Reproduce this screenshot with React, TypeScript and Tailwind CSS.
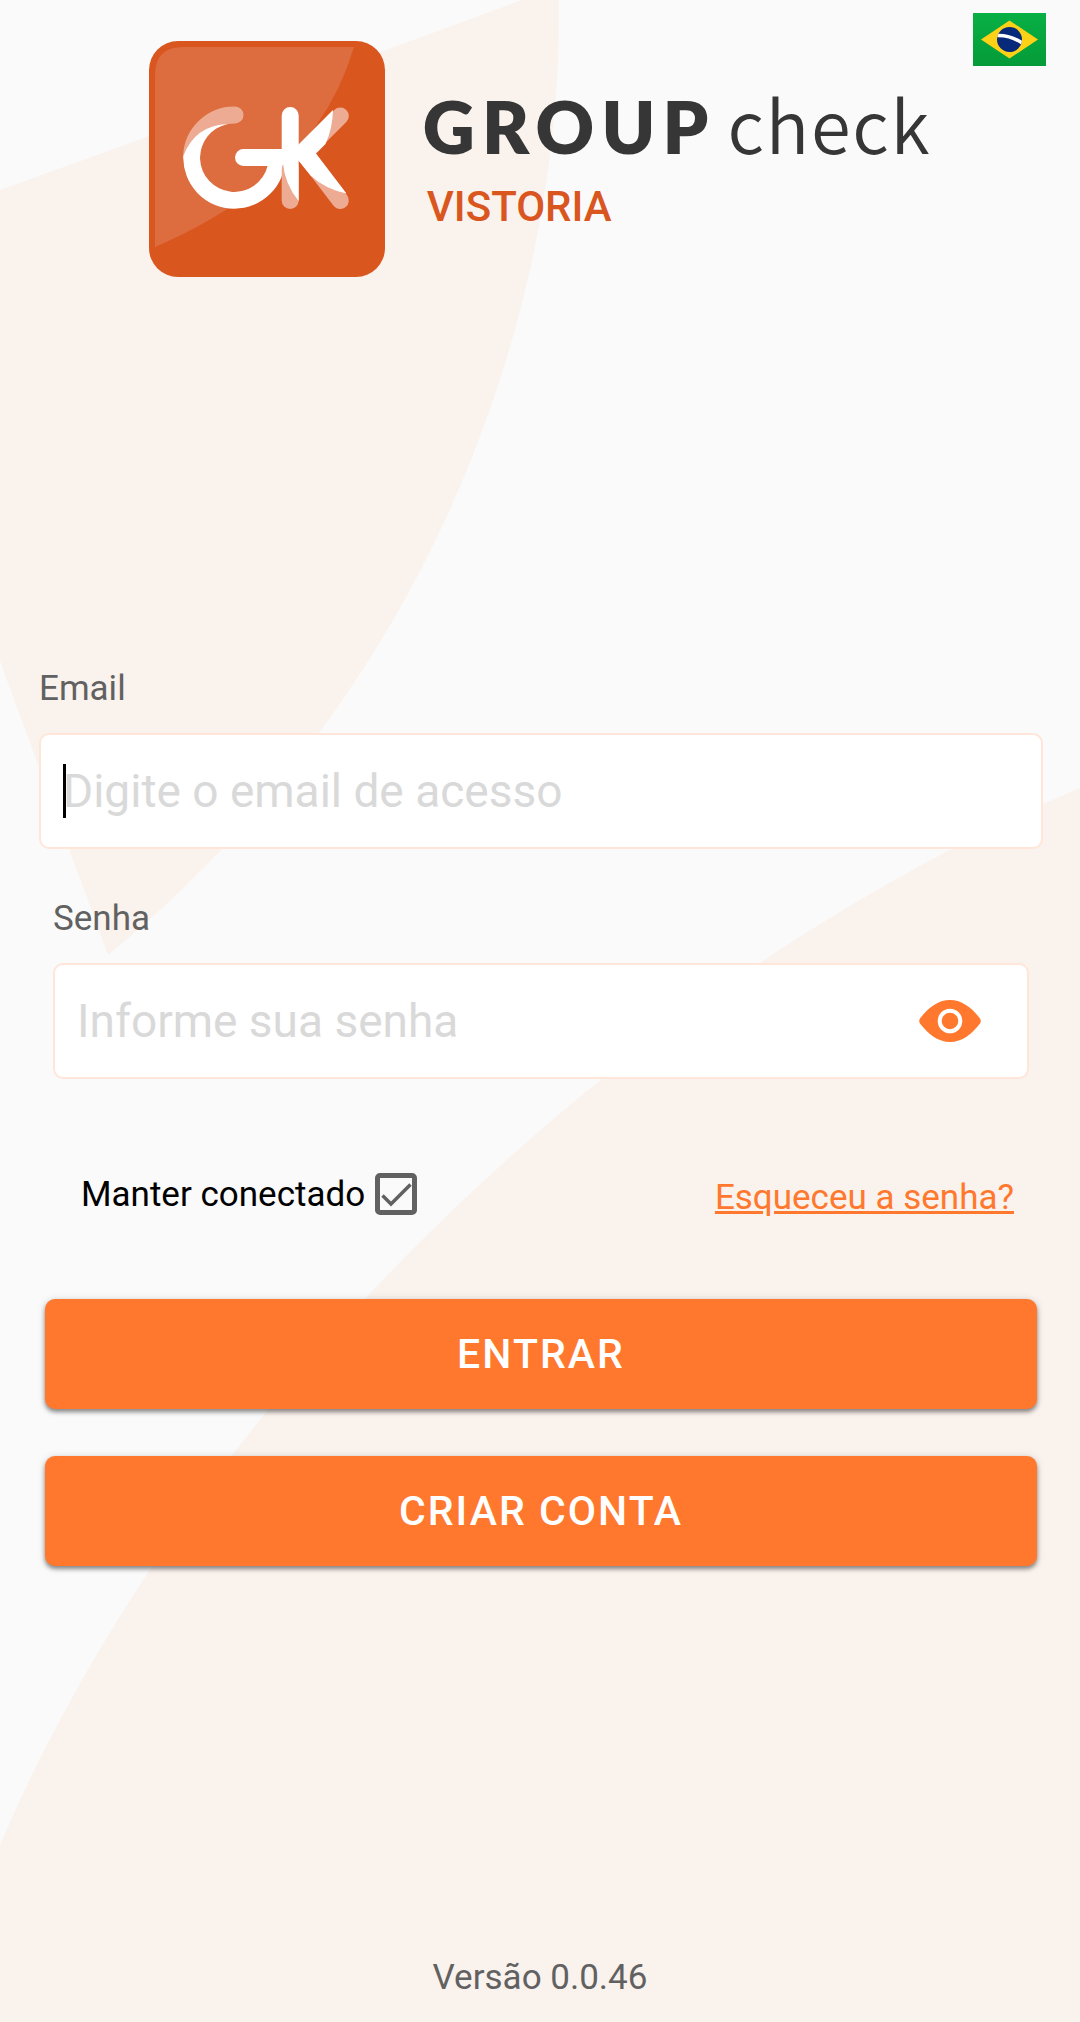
import { useState } from "react";

const FlagBrazil = () => (
  <svg viewBox="0 0 73 53" className="h-[53px] w-[73px]" aria-hidden="true">
    <defs>
      <linearGradient id="flag-green" x1="0" y1="0" x2="0" y2="1">
        <stop offset="0" stopColor="#08b045" />
        <stop offset="1" stopColor="#059b38" />
      </linearGradient>
      <clipPath id="flag-globe">
        <circle cx="36.5" cy="26.5" r="12.5" />
      </clipPath>
    </defs>
    <rect width="73" height="53" fill="url(#flag-green)" />
    <path d="M36.5 7.5 65 26.5 36.5 45.5 8 26.5Z" fill="#fdd116" />
    <circle cx="36.5" cy="26.5" r="12.5" fill="#06297a" />
    <path
      d="M23 22.5Q37 21.5 50 30.5"
      fill="none"
      stroke="#fff"
      strokeWidth="3.5"
      clipPath="url(#flag-globe)"
    />
  </svg>
);

const LogoMark = () => (
  <svg viewBox="0 0 236 236" className="size-[236px] shrink-0" aria-hidden="true">
    <rect width="236" height="236" rx="29" fill="#d9561f" />
    <path d="M6 206V34Q6 6 34 6H205Q166 138 6 206Z" fill="#dd6c3f" />

    {/* G */}
    <path
      d="M86 74A42.7 42.7 0 0 0 42.6 115"
      fill="none"
      stroke="#ecab92"
      strokeWidth="17"
      strokeLinecap="round"
    />
    <path
      d="M34.3 115Q46 84 79 82.9A34.3 34.3 0 1 0 118.6 125H94.5A8.5 8.5 0 0 1 94.5 108H136.3V117A51 51 0 0 1 85.3 167.7A51 51 0 0 1 34.3 115Z"
      fill="#fff"
    />

    {/* K */}
    <g fill="none" stroke="#ecab92" strokeWidth="17" strokeLinecap="round">
      <path d="M141.2 128V159.5" />
      <path d="M160 106.3 191.3 75" />
      <path d="M160 118.5 191.3 159.5" />
    </g>
    <path d="M132.7 74.5A8.5 8.5 0 0 1 149.7 74.5V160Q136 144 133.7 121H132.7Z" fill="#fff" />
    <path d="M149 104 184 69Q183.5 88 176.5 103L167 112.5 197.5 152.5Q176 148 161.5 134.5L149 119Z" fill="#fff" />
  </svg>
);

const EyeIcon = () => (
  <svg viewBox="0 0 62 42" className="h-[42px] w-[62px]" aria-hidden="true">
    <path
      d="M1 18.5C9 8 19 0 31 0S53 8 61 18.5Q62.5 21 61 23.5C53 34 43 42 31 42S9 34 1 23.5Q-.5 21 1 18.5Z"
      fill="#ff782d"
    />
    <circle cx="31" cy="21" r="10.3" fill="none" stroke="#fff" strokeWidth="4" />
  </svg>
);

const Backdrop = () => (
  <svg
    viewBox="0 0 1080 2022"
    preserveAspectRatio="none"
    className="absolute inset-0 size-full"
    aria-hidden="true"
  >
    <path d="M0 190Q265 95 522 0H559C562 330 420 700 108 955L0 661Z" fill="#faf2ed" />
    <path d="M1080 788C620 985 190 1400 0 1845V2022H1080Z" fill="#faf2ed" />
  </svg>
);

const inputClass =
  "h-[116px] w-full rounded-[10px] border-2 border-[#ffe6d9] bg-white px-[22px] text-[46px] text-black outline-none placeholder:text-[#d9d9d9]";

const buttonClass =
  "h-[110px] rounded-[10px] bg-[#ff782d] text-[41px] font-medium tracking-wider text-white shadow-[0_3px_4px_rgba(0,0,0,0.4),0_1px_8px_rgba(0,0,0,0.15)]";

const App = () => {
  const [email, setEmail] = useState("");
  const [password, setPassword] = useState("");
  const [showPassword, setShowPassword] = useState(false);
  const [keepConnected, setKeepConnected] = useState(true);

  return (
    <div className="relative flex min-h-screen flex-col bg-[#fafafa] font-[Roboto,sans-serif] text-[35px] leading-[41px] text-[#616161]">
      <Backdrop />

      <button type="button" aria-label="Idioma" className="absolute top-[13px] right-[34px] z-10">
        <FlagBrazil />
      </button>

      <header className="relative flex justify-center gap-[38px] pt-[41px]">
        <LogoMark />
        <div className="pt-[42px]">
          <h1 className="flex items-baseline gap-3 text-[72px] leading-[80px] text-[#363636]">
            <span className="font-[Lato,sans-serif] font-extrabold tracking-widest">GROUP</span>
            <span className="font-['Noto_Sans_CJK_SC',sans-serif] font-[350] tracking-wide">check</span>
          </h1>
          <p className="mt-[13px] pl-1 text-[42px] leading-[56px] font-medium text-[#d9561f]">VISTORIA</p>
        </div>
      </header>

      <form
        className="relative mt-[391px] flex flex-col pr-[37px] pl-[39px]"
        onSubmit={(e) => e.preventDefault()}
      >
        <label htmlFor="email">Email</label>
        <div className="relative mt-6">
          <input
            id="email"
            type="email"
            placeholder="Digite o email de acesso"
            value={email}
            onChange={(e) => setEmail(e.target.value)}
            className={inputClass}
          />
          {/* caret */}
          {!email && <span className="absolute top-[31px] left-6 h-[54px] w-[3px] bg-black" />}
        </div>

        <div className="mt-[49px] flex flex-col px-[14px]">
          <label htmlFor="password">Senha</label>
          <div className="relative mt-6">
            <input
              id="password"
              type={showPassword ? "text" : "password"}
              placeholder="Informe sua senha"
              value={password}
              onChange={(e) => setPassword(e.target.value)}
              className={inputClass}
            />
            <button
              type="button"
              aria-label="Mostrar senha"
              onClick={() => setShowPassword(!showPassword)}
              className="absolute inset-y-0 right-12 flex items-center"
            >
              <EyeIcon />
            </button>
          </div>
        </div>

        <div className="mt-[94px] flex items-start justify-between pr-[29px] pl-[42px]">
          <label className="flex items-center gap-[10px] text-black">
            Manter conectado
            <span className="relative size-[42px]">
              <input
                type="checkbox"
                checked={keepConnected}
                onChange={(e) => setKeepConnected(e.target.checked)}
                className="block size-[42px] appearance-none rounded-[5px] border-5 border-[#616161]"
              />
              {keepConnected && (
                <svg viewBox="0 0 42 42" className="pointer-events-none absolute inset-0" aria-hidden="true">
                  <path d="M7.5 22.5 16 31 35.5 11.5" fill="none" stroke="#616161" strokeWidth="3.5" />
                </svg>
              )}
            </span>
          </label>
          <a href="#" className="pt-1 text-[#ff782d] underline">
            Esqueceu a senha?
          </a>
        </div>

        <div className="mt-[81px] flex flex-col gap-[47px] px-[6px]">
          <button type="submit" className={buttonClass}>
            ENTRAR
          </button>
          <button type="button" className={buttonClass}>
            CRIAR CONTA
          </button>
        </div>
      </form>

      <footer className="relative mt-auto pb-6 text-center">Versão 0.0.46</footer>
    </div>
  );
};

export default App;
